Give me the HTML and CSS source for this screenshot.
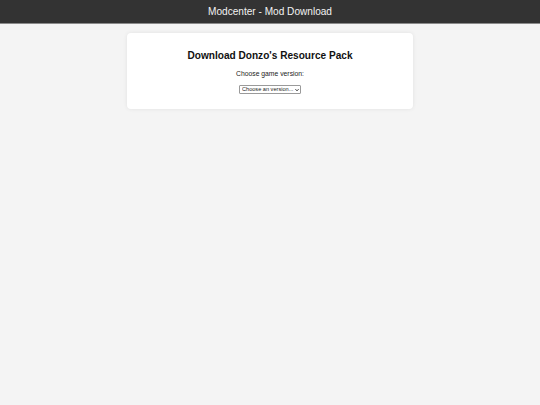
FILE: index.html
```html
<!DOCTYPE html>
<html lang="en">
<head>
<meta charset="utf-8">
<title>Modcenter - Mod Download</title>
<link rel="stylesheet" href="styles.css">
</head>
<body>
<header class="topbar">Modcenter - Mod Download</header>
<main class="page">
  <section class="card">
    <h2 class="title">Download Donzo's Resource Pack</h2>
    <label class="label" for="version">Choose game version:</label>
    <span class="select-wrap">
      <select id="version" class="select">
        <option>Choose an version...</option>
      </select>
      <svg class="chev" viewBox="0 0 8 8" width="4" height="4"><path d="M1 2.5 L4 5.5 L7 2.5" fill="none" stroke="#222" stroke-width="2"/></svg>
    </span>
  </section>
</main>
</body>
</html>
```
FILE: styles.css
```css
html, body {
  margin: 0;
  padding: 0;
}
body {
  background: #f4f4f4;
  font-family: "Liberation Sans", Arial, sans-serif;
  color: #222;
  min-height: 405px;
}
.topbar {
  background: #333;
  color: #f2f2f2;
  font-size: 10.1px;
  line-height: 24px;
  height: 23px;
  text-align: center;
  border-bottom: 1px solid #8a8a8a;
}
.page {
  display: flex;
  justify-content: center;
  padding-top: 9px;
}
.card {
  width: 286px;
  box-sizing: border-box;
  background: #fff;
  border-radius: 4px;
  box-shadow: 0 0 4px rgba(0,0,0,0.08);
  padding: 16px 10px 15px;
  display: flex;
  flex-direction: column;
  align-items: center;
}
.title {
  margin: 0 0 8px;
  font-size: 10.1px;
  line-height: 13px;
  font-weight: bold;
  color: #111;
}
.label {
  display: block;
  font-size: 6.8px;
  line-height: 8px;
  margin-bottom: 7px;
  color: #222;
}
.select-wrap {
  position: relative;
  display: inline-block;
  height: 9px;
}
.select {
  appearance: none;
  -webkit-appearance: none;
  width: 62px;
  height: 9px;
  box-sizing: border-box;
  border: 1px solid #9a9a9a;
  border-radius: 1px;
  background: #fff;
  font-family: "Liberation Sans", Arial, sans-serif;
  font-size: 5.6px;
  line-height: 7px;
  padding: 0 6px 0 2px;
  margin: 0;
  color: #222;
  display: block;
}
.chev {
  position: absolute;
  right: 2px;
  top: 2.5px;
  pointer-events: none;
}
```
